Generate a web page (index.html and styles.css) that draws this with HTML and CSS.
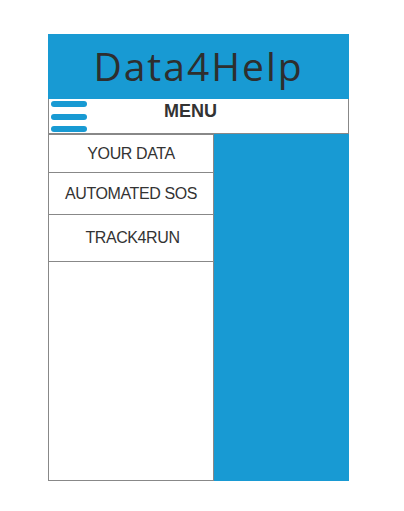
FILE: index.html
```html
<!DOCTYPE html>
<html>
<head>
<meta charset="utf-8">
<link rel="stylesheet" href="styles.css">
</head>
<body>
<div class="app">
  <div class="header">Data4Help</div>
  <div class="menubar">
    <div class="burger"><span></span><span></span><span></span></div>
    <div class="menu-title">MENU</div>
  </div>
  <div class="body">
    <div class="side">
      <div class="item item-1">YOUR DATA</div>
      <div class="item item-2">AUTOMATED SOS</div>
      <div class="item item-3">TRACK4RUN</div>
    </div>
    <div class="panel"></div>
  </div>
</div>
</body>
</html>
```
FILE: styles.css
```css
html, body { margin: 0; padding: 0; background: #fff; }
.app {
  margin: 34px 0 0 48px;
  width: 301px;
  font-family: "Liberation Sans", Arial, sans-serif;
  color: #333;
}
.header {
  height: 65px;
  background: #189ad3;
  display: flex;
  align-items: center;
  justify-content: center;
  font-family: "Open Sans", sans-serif;
  font-weight: 400;
  font-size: 39px;
  letter-spacing: 2px;
  color: #2e2e2e;
  padding-bottom: 2px;
  box-sizing: border-box;
}
.menubar {
  height: 35px;
  box-sizing: border-box;
  border-left: 1px solid #888;
  border-right: 1px solid #888;
  border-bottom: 1px solid #888;
  display: flex;
  align-items: flex-start;
}
.burger {
  margin: 2px 0 0 2px;
  display: flex;
  flex-direction: column;
  gap: 6.5px;
}
.burger span {
  display: block;
  width: 36px;
  height: 6px;
  border-radius: 3px;
  background: #189ad3;
}
.menu-title {
  margin: 2px 0 0 77px;
  font-weight: bold;
  font-size: 18px;
  line-height: 20px;
  color: #333;
}
.body {
  display: grid;
  grid-template-columns: 166px 135px;
  height: 347px;
}
.side {
  border: 1px solid #888;
}
.item {
  display: flex;
  align-items: center;
  justify-content: center;
  font-size: 16px;
  letter-spacing: -0.4px;
  border-bottom: 1px solid #888;
  color: #333;
}
.item-1 { height: 37px; }
.item-2 { height: 41px; }
.item-3 { height: 46px; padding-left: 3px; box-sizing: content-box; }
.panel { background: #189ad3; }
```
